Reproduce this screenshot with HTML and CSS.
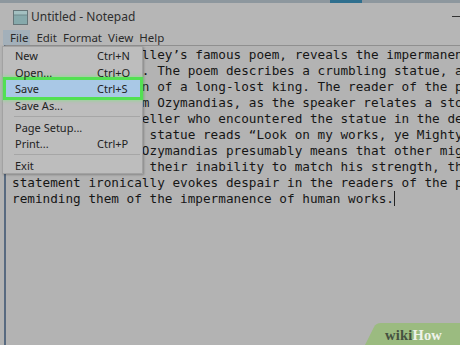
FILE: index.html
```html
<!DOCTYPE html>
<html lang="en">
<head>
    <meta charset="UTF-8">
    <meta name="viewport" content="width=device-width, initial-scale=1.0">
    <title>Untitled - Notepad</title>
    <link rel="stylesheet" href="styles.css">
</head>
<body>
    <div class="window">
        <div class="topstrip"><span class="tab"></span></div>
        <div class="titlebar">
            <svg class="app-icon" width="15" height="15" viewBox="0 0 15 15">
                <rect x="0.5" y="0.5" width="14" height="14" fill="#86a9ab" stroke="#667578"/>
                <rect x="1" y="1" width="13" height="4" fill="#a3c0c1"/>
                <line x1="1" y1="5" x2="14" y2="5" stroke="#6f8a8c"/>
            </svg>
            <span class="title">Untitled - Notepad</span>
            <span class="minimize"></span>
        </div>
        <div class="menubar">
            <span class="menubar-item active">File</span>
            <span class="menubar-item">Edit</span>
            <span class="menubar-item">Format</span>
            <span class="menubar-item">View</span>
            <span class="menubar-item">Help</span>
        </div>
        <div class="editor">
<pre class="text">“Ozymandias,” Shelley’s famous poem, reveals the impermanence of power
of power and fame. The poem describes a crumbling statue, a remnant
a sculpted version of a long-lost king. The reader of the poem learns
learns of him from Ozymandias, as the speaker relates a story
a story of a traveller who encountered the statue in the desert.
sert. The ancient statue reads “Look on my works, ye Mighty, and
y, and despair!” Ozymandias presumably means that other mighty
hty kings despair their inability to match his strength, though the
statement ironically evokes despair in the readers of the poem,
reminding them of the impermanence of human works.<span class="caret"></span></pre>
        </div>

        <!-- open File menu, drawn over the text -->
        <div class="menu">
            <div class="menu-item first"><span>New</span><span>Ctrl+N</span></div>
            <div class="menu-item"><span>Open...</span><span>Ctrl+O</span></div>
            <div class="menu-item selected"><span>Save</span><span>Ctrl+S</span></div>
            <div class="menu-item"><span>Save As...</span><span></span></div>
            <div class="menu-sep"></div>
            <div class="menu-item"><span>Page Setup...</span><span></span></div>
            <div class="menu-item"><span>Print...</span><span>Ctrl+P</span></div>
            <div class="menu-sep"></div>
            <div class="menu-item"><span>Exit</span><span></span></div>
        </div>

        <div class="wikihow">
            <svg class="wikihow-bg" width="95" height="23" viewBox="0 0 95 23">
                <path d="M0 23 L9 5 Q11 1 16 1 L95 1 L95 23 Z" fill="#9bbb80"/>
            </svg>
            <span class="wikihow-text"><span class="wiki">wiki</span><span class="how">How</span></span>
        </div>
    </div>
</body>
</html>
```

FILE: styles.css
```css
* {
    box-sizing: border-box;
}
body {
    margin: 0;
    padding: 0;
    background-color: #b3b3b3;
}
.window {
    position: relative;
    width: 460px;
    height: 345px;
    overflow: hidden;
    background-color: #b3b3b3;
    font-family: "Noto Sans", "Open Sans", Arial, sans-serif;
}
.topstrip {
    height: 3px;
    background-color: #8d979e;
    display: flex;
}
.tab {
    width: 32px;
    margin-left: 330px;
    background-color: #2f6f8e;
}
.titlebar {
    height: 27px;
    display: flex;
    align-items: center;
    padding-left: 13px;
    background-color: #b6b6b6;
}
.app-icon {
    display: block;
    margin-top: 1px;
}
.title {
    margin-left: 3px;
    font-size: 12px;
    color: #2e2e2e;
}
.minimize {
    margin-left: auto;
    width: 8px;
    height: 1px;
    background-color: #333;
}
.menubar {
    height: 15px;
    display: flex;
    align-items: center;
    gap: 6px;
    padding-left: 3px;
    background-color: #b6b6b6;
    font-size: 11.5px;
    color: #2a2a2a;
}
.menubar-item {
    height: 15px;
    line-height: 15px;
}
.menubar-item.active {
    background-color: #a3b0ba;
    padding: 0 2px 0 7px;
}
.editor {
    margin-left: 4px;
    height: 300px;
    border-top: 1px solid #8f8f8f;
    border-left: 2px solid #586a80;
    padding: 1px 0 0 6px;
}
.text {
    margin: 0;
    font-family: "DejaVu Sans Mono", "Liberation Mono", monospace;
    font-size: 12.7px;
    line-height: 16px;
    color: #161616;
    white-space: pre;
}
.caret {
    display: inline-block;
    width: 1px;
    height: 15px;
    vertical-align: -3px;
    background-color: #222;
}
.menu {
    position: absolute;
    left: 2px;
    top: 46px;
    width: 141px;
    height: 128px;
    background-color: #bdbdbd;
    border: 1px solid #a2a2a2;
    box-shadow: 1px 1px 2px rgba(0, 0, 0, 0.25);
    font-size: 11px;
    color: #222;
}
.menu-item {
    display: grid;
    grid-template-columns: 82px 1fr;
    height: 16px;
    align-items: center;
    padding-left: 12px;
}
.menu-item.first {
    height: 17px;
}
.menu-item.selected {
    height: 17px;
    margin: 0 2px 0 3px;
    padding-left: 9px;
    background-color: #a9c8e6;
    box-shadow: 0 0 0 3px #52e052, 0 0 3px 4px rgba(120, 240, 120, 0.5);
}
.menu-sep {
    height: 4px;
    margin: 0 2px 2px 11px;
    border-bottom: 1px solid #a6a6a6;
}
.wikihow {
    position: absolute;
    right: 0;
    bottom: 0;
    width: 95px;
    height: 23px;
}
.wikihow-bg {
    display: block;
}
.wikihow-text {
    position: absolute;
    left: 20px;
    top: 5px;
    font-family: "Liberation Serif", "DejaVu Serif", serif;
    font-weight: bold;
    font-size: 14.5px;
    line-height: 16px;
    letter-spacing: 0.2px;
}
.wiki {
    color: #45513f;
}
.how {
    color: #eef3ea;
}
```
